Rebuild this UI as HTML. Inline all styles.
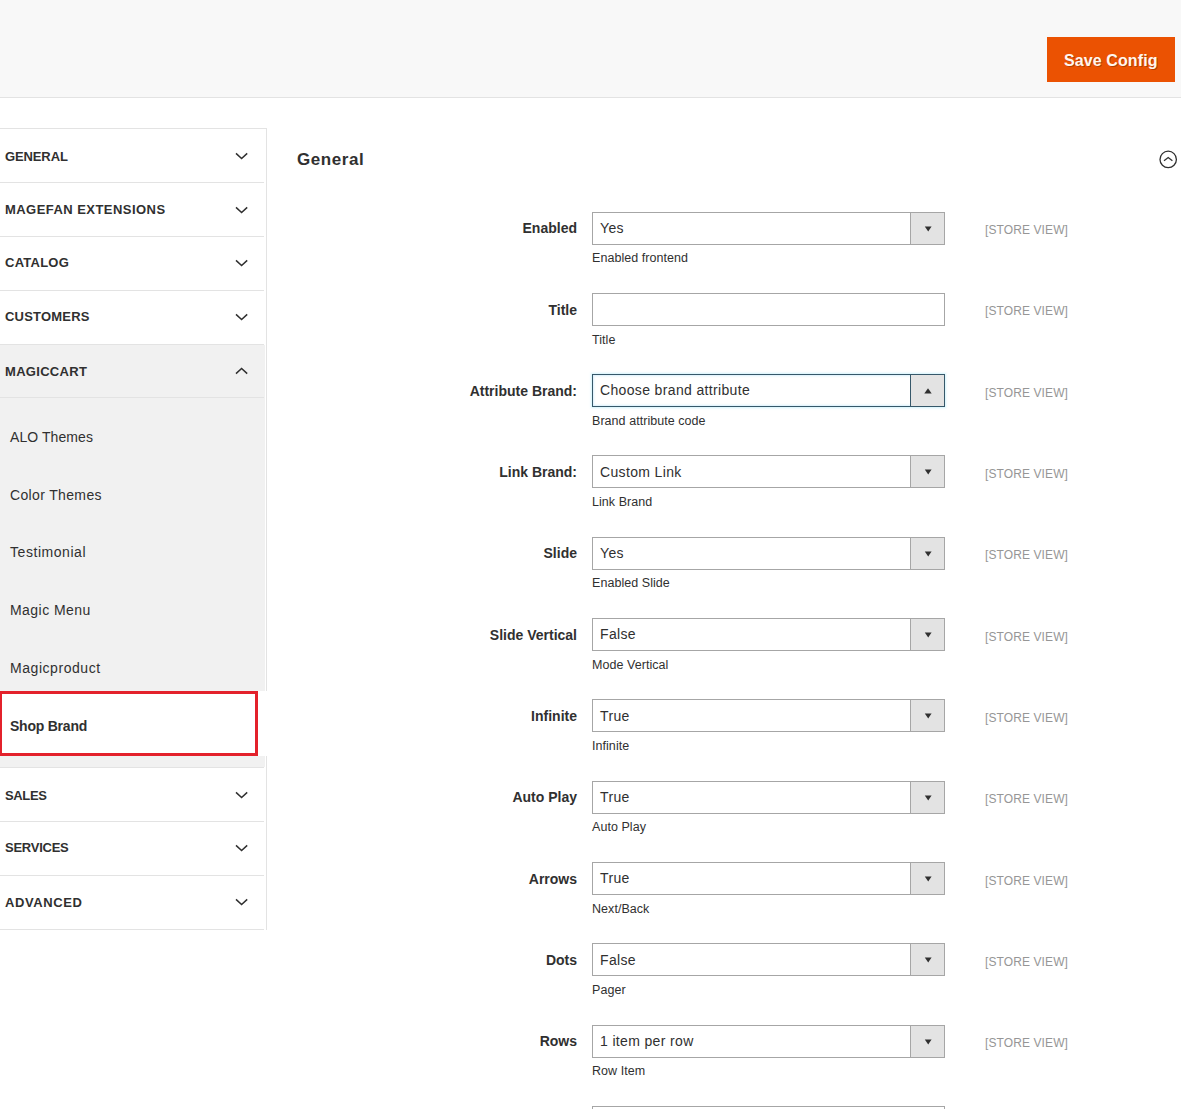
<!DOCTYPE html>
<html><head><meta charset="utf-8"><style>
html,body{margin:0;padding:0;background:#fff;width:1181px;height:1109px;overflow:hidden;position:relative;font-family:"Liberation Sans",sans-serif;}
.t{position:absolute;white-space:nowrap;line-height:20px;}
.b{position:absolute;box-sizing:border-box;}
</style></head><body>
<div class="b" style="left:0;top:0;width:1181px;height:97px;background:#f8f8f8"></div>
<div class="b" style="left:0;top:97px;width:1181px;height:1px;background:#e3e3e3"></div>
<div class="b" style="left:1047px;top:37px;width:128px;height:45px;background:#eb5202"></div>
<div class="t" style="left:1064px;top:51.26px;font-size:16px;font-weight:bold;letter-spacing:0.1px;color:#fff6ee;text-shadow:1px 1px 0 rgba(0,0,0,.25)">Save Config</div>
<div class="b" style="left:266px;top:128px;width:1px;height:802px;background:#e3e3e3"></div>
<div class="b" style="left:0;top:128px;width:266px;height:1px;background:#e3e3e3"></div>
<div class="b" style="left:0;top:345px;width:265px;height:422px;background:#f1f1f1"></div>
<div class="b" style="left:0;top:182px;width:264px;height:1px;background:#e3e3e3"></div>
<div class="b" style="left:0;top:236px;width:264px;height:1px;background:#e3e3e3"></div>
<div class="b" style="left:0;top:290px;width:264px;height:1px;background:#e3e3e3"></div>
<div class="b" style="left:0;top:344px;width:264px;height:1px;background:#e3e3e3"></div>
<div class="b" style="left:0;top:397px;width:264px;height:1px;background:#e3e3e3"></div>
<div class="b" style="left:0;top:767px;width:264px;height:1px;background:#e3e3e3"></div>
<div class="b" style="left:0;top:821px;width:264px;height:1px;background:#e3e3e3"></div>
<div class="b" style="left:0;top:875px;width:264px;height:1px;background:#e3e3e3"></div>
<div class="b" style="left:0;top:929px;width:264px;height:1px;background:#e3e3e3"></div>
<div class="t" style="left:5px;top:146.50px;font-size:13px;font-weight:bold;letter-spacing:-0.12px;color:#303030;">GENERAL</div>
<div class="t" style="left:5px;top:200.30px;font-size:13px;font-weight:bold;letter-spacing:0.45px;color:#303030;">MAGEFAN EXTENSIONS</div>
<div class="t" style="left:5px;top:253.20px;font-size:13px;font-weight:bold;letter-spacing:0.25px;color:#303030;">CATALOG</div>
<div class="t" style="left:5px;top:307.00px;font-size:13px;font-weight:bold;letter-spacing:0.2px;color:#303030;">CUSTOMERS</div>
<div class="t" style="left:5px;top:361.50px;font-size:13px;font-weight:bold;letter-spacing:0.3px;color:#303030;">MAGICCART</div>
<div class="t" style="left:5px;top:785.50px;font-size:13px;font-weight:bold;letter-spacing:-0.35px;color:#303030;">SALES</div>
<div class="t" style="left:5px;top:838.20px;font-size:13px;font-weight:bold;letter-spacing:-0.25px;color:#303030;">SERVICES</div>
<div class="t" style="left:5px;top:892.50px;font-size:13px;font-weight:bold;letter-spacing:0.6px;color:#303030;">ADVANCED</div>
<svg class="b" style="left:0;top:0" width="300" height="1000"><path d="M236.0,153.4 L241.6,158.5 L247.2,153.4 M236.0,207.4 L241.6,212.5 L247.2,207.4 M236.0,260.4 L241.6,265.5 L247.2,260.4 M236.0,314.4 L241.6,319.5 L247.2,314.4 M236.0,373.6 L241.6,368.5 L247.2,373.6 M236.0,792.4 L241.6,797.5 L247.2,792.4 M236.0,845.4 L241.6,850.5 L247.2,845.4 M236.0,899.4 L241.6,904.5 L247.2,899.4" fill="none" stroke="#303030" stroke-width="1.5"/></svg>
<div class="t" style="left:10px;top:427.05px;font-size:14px;letter-spacing:0.08px;color:#303030;">ALO Themes</div>
<div class="t" style="left:10px;top:485.05px;font-size:14px;letter-spacing:0.35px;color:#303030;">Color Themes</div>
<div class="t" style="left:10px;top:541.85px;font-size:14px;letter-spacing:0.55px;color:#303030;">Testimonial</div>
<div class="t" style="left:10px;top:600.25px;font-size:14px;letter-spacing:0.45px;color:#303030;">Magic Menu</div>
<div class="t" style="left:10px;top:658.05px;font-size:14px;letter-spacing:0.55px;color:#303030;">Magicproduct</div>
<div class="b" style="left:-1px;top:691px;width:259px;height:65px;background:#fff;border:3px solid #e3212b"></div>
<div class="b" style="left:258px;top:691px;width:10px;height:65px;background:#fff"></div>
<div class="t" style="left:10px;top:715.85px;font-size:14px;font-weight:bold;letter-spacing:-0.23px;color:#303030;">Shop Brand</div>
<div class="t" style="left:297px;top:150.11px;font-size:17px;font-weight:bold;letter-spacing:0.55px;color:#303030;">General</div>
<svg class="b" style="left:1155px;top:146px" width="26" height="26"><circle cx="13.2" cy="13.4" r="8.2" fill="none" stroke="#303030" stroke-width="1.3"/><path d="M9,14.8 L13.2,11.6 L17.4,14.8" fill="none" stroke="#303030" stroke-width="1.3"/></svg>
<div class="b" style="left:592px;top:212px;width:353px;height:33px;border:1px solid #a6a6a6;background:#fff"></div>
<div class="b" style="left:910px;top:212px;width:35px;height:33px;border:1px solid #a6a6a6;background:#e3e3e3"></div>
<svg class="b" style="left:924px;top:225px" width="9" height="8"><path d="M0.8,1.5 L7.6,1.5 L4.2,6.6 Z" fill="#303030"/></svg>
<div class="t" style="right:604px;text-align:right;top:218.25px;font-size:14px;font-weight:bold;color:#303030;">Enabled</div>
<div class="t" style="left:600px;top:217.85px;font-size:14px;letter-spacing:0.35px;color:#303030;">Yes</div>
<div class="t" style="left:592px;top:248.27px;font-size:12.5px;letter-spacing:0.05px;color:#303030;">Enabled frontend</div>
<div class="t" style="left:985px;top:220.14px;font-size:12px;letter-spacing:0.1px;color:#969696;">[STORE VIEW]</div>
<div class="b" style="left:592px;top:293px;width:353px;height:33px;border:1px solid #a6a6a6;background:#fff"></div>
<div class="t" style="right:604px;text-align:right;top:299.55px;font-size:14px;font-weight:bold;color:#303030;">Title</div>
<div class="t" style="left:592px;top:329.57px;font-size:12.5px;letter-spacing:0.05px;color:#303030;">Title</div>
<div class="t" style="left:985px;top:301.44px;font-size:12px;letter-spacing:0.1px;color:#969696;">[STORE VIEW]</div>
<div class="b" style="left:592px;top:374px;width:353px;height:33px;border:1px solid #36586a;background:#fff;box-shadow:0 0 2px 1px rgba(180,235,250,.6), inset 0 0 2px 1px rgba(180,225,250,.5)"></div>
<div class="b" style="left:910px;top:374px;width:35px;height:33px;border:1px solid #36586a;background:#e3e3e3"></div>
<svg class="b" style="left:924px;top:386.5px" width="9" height="8"><path d="M0.3,6.5 L4,1.3 L7.7,6.5 Z" fill="#303030"/></svg>
<div class="t" style="right:604px;text-align:right;top:380.85px;font-size:14px;font-weight:bold;color:#303030;">Attribute Brand:</div>
<div class="t" style="left:600px;top:380.45px;font-size:14px;letter-spacing:0.35px;color:#303030;">Choose brand attribute</div>
<div class="t" style="left:592px;top:410.87px;font-size:12.5px;letter-spacing:0.05px;color:#303030;">Brand attribute code</div>
<div class="t" style="left:985px;top:382.74px;font-size:12px;letter-spacing:0.1px;color:#969696;">[STORE VIEW]</div>
<div class="b" style="left:592px;top:455px;width:353px;height:33px;border:1px solid #a6a6a6;background:#fff"></div>
<div class="b" style="left:910px;top:455px;width:35px;height:33px;border:1px solid #a6a6a6;background:#e3e3e3"></div>
<svg class="b" style="left:924px;top:468px" width="9" height="8"><path d="M0.8,1.5 L7.6,1.5 L4.2,6.6 Z" fill="#303030"/></svg>
<div class="t" style="right:604px;text-align:right;top:462.15px;font-size:14px;font-weight:bold;color:#303030;">Link Brand:</div>
<div class="t" style="left:600px;top:461.75px;font-size:14px;letter-spacing:0.35px;color:#303030;">Custom Link</div>
<div class="t" style="left:592px;top:492.17px;font-size:12.5px;letter-spacing:0.05px;color:#303030;">Link Brand</div>
<div class="t" style="left:985px;top:464.04px;font-size:12px;letter-spacing:0.1px;color:#969696;">[STORE VIEW]</div>
<div class="b" style="left:592px;top:537px;width:353px;height:33px;border:1px solid #a6a6a6;background:#fff"></div>
<div class="b" style="left:910px;top:537px;width:35px;height:33px;border:1px solid #a6a6a6;background:#e3e3e3"></div>
<svg class="b" style="left:924px;top:550px" width="9" height="8"><path d="M0.8,1.5 L7.6,1.5 L4.2,6.6 Z" fill="#303030"/></svg>
<div class="t" style="right:604px;text-align:right;top:543.45px;font-size:14px;font-weight:bold;color:#303030;">Slide</div>
<div class="t" style="left:600px;top:543.05px;font-size:14px;letter-spacing:0.35px;color:#303030;">Yes</div>
<div class="t" style="left:592px;top:573.47px;font-size:12.5px;letter-spacing:0.05px;color:#303030;">Enabled Slide</div>
<div class="t" style="left:985px;top:545.34px;font-size:12px;letter-spacing:0.1px;color:#969696;">[STORE VIEW]</div>
<div class="b" style="left:592px;top:618px;width:353px;height:33px;border:1px solid #a6a6a6;background:#fff"></div>
<div class="b" style="left:910px;top:618px;width:35px;height:33px;border:1px solid #a6a6a6;background:#e3e3e3"></div>
<svg class="b" style="left:924px;top:631px" width="9" height="8"><path d="M0.8,1.5 L7.6,1.5 L4.2,6.6 Z" fill="#303030"/></svg>
<div class="t" style="right:604px;text-align:right;top:624.75px;font-size:14px;font-weight:bold;color:#303030;">Slide Vertical</div>
<div class="t" style="left:600px;top:624.35px;font-size:14px;letter-spacing:0.35px;color:#303030;">False</div>
<div class="t" style="left:592px;top:654.77px;font-size:12.5px;letter-spacing:0.05px;color:#303030;">Mode Vertical</div>
<div class="t" style="left:985px;top:626.64px;font-size:12px;letter-spacing:0.1px;color:#969696;">[STORE VIEW]</div>
<div class="b" style="left:592px;top:699px;width:353px;height:33px;border:1px solid #a6a6a6;background:#fff"></div>
<div class="b" style="left:910px;top:699px;width:35px;height:33px;border:1px solid #a6a6a6;background:#e3e3e3"></div>
<svg class="b" style="left:924px;top:712px" width="9" height="8"><path d="M0.8,1.5 L7.6,1.5 L4.2,6.6 Z" fill="#303030"/></svg>
<div class="t" style="right:604px;text-align:right;top:706.05px;font-size:14px;font-weight:bold;color:#303030;">Infinite</div>
<div class="t" style="left:600px;top:705.65px;font-size:14px;letter-spacing:0.35px;color:#303030;">True</div>
<div class="t" style="left:592px;top:736.07px;font-size:12.5px;letter-spacing:0.05px;color:#303030;">Infinite</div>
<div class="t" style="left:985px;top:707.94px;font-size:12px;letter-spacing:0.1px;color:#969696;">[STORE VIEW]</div>
<div class="b" style="left:592px;top:781px;width:353px;height:33px;border:1px solid #a6a6a6;background:#fff"></div>
<div class="b" style="left:910px;top:781px;width:35px;height:33px;border:1px solid #a6a6a6;background:#e3e3e3"></div>
<svg class="b" style="left:924px;top:794px" width="9" height="8"><path d="M0.8,1.5 L7.6,1.5 L4.2,6.6 Z" fill="#303030"/></svg>
<div class="t" style="right:604px;text-align:right;top:787.35px;font-size:14px;font-weight:bold;color:#303030;">Auto Play</div>
<div class="t" style="left:600px;top:786.95px;font-size:14px;letter-spacing:0.35px;color:#303030;">True</div>
<div class="t" style="left:592px;top:817.37px;font-size:12.5px;letter-spacing:0.05px;color:#303030;">Auto Play</div>
<div class="t" style="left:985px;top:789.24px;font-size:12px;letter-spacing:0.1px;color:#969696;">[STORE VIEW]</div>
<div class="b" style="left:592px;top:862px;width:353px;height:33px;border:1px solid #a6a6a6;background:#fff"></div>
<div class="b" style="left:910px;top:862px;width:35px;height:33px;border:1px solid #a6a6a6;background:#e3e3e3"></div>
<svg class="b" style="left:924px;top:875px" width="9" height="8"><path d="M0.8,1.5 L7.6,1.5 L4.2,6.6 Z" fill="#303030"/></svg>
<div class="t" style="right:604px;text-align:right;top:868.65px;font-size:14px;font-weight:bold;color:#303030;">Arrows</div>
<div class="t" style="left:600px;top:868.25px;font-size:14px;letter-spacing:0.35px;color:#303030;">True</div>
<div class="t" style="left:592px;top:898.67px;font-size:12.5px;letter-spacing:0.05px;color:#303030;">Next/Back</div>
<div class="t" style="left:985px;top:870.54px;font-size:12px;letter-spacing:0.1px;color:#969696;">[STORE VIEW]</div>
<div class="b" style="left:592px;top:943px;width:353px;height:33px;border:1px solid #a6a6a6;background:#fff"></div>
<div class="b" style="left:910px;top:943px;width:35px;height:33px;border:1px solid #a6a6a6;background:#e3e3e3"></div>
<svg class="b" style="left:924px;top:956px" width="9" height="8"><path d="M0.8,1.5 L7.6,1.5 L4.2,6.6 Z" fill="#303030"/></svg>
<div class="t" style="right:604px;text-align:right;top:949.95px;font-size:14px;font-weight:bold;color:#303030;">Dots</div>
<div class="t" style="left:600px;top:949.55px;font-size:14px;letter-spacing:0.35px;color:#303030;">False</div>
<div class="t" style="left:592px;top:979.97px;font-size:12.5px;letter-spacing:0.05px;color:#303030;">Pager</div>
<div class="t" style="left:985px;top:951.84px;font-size:12px;letter-spacing:0.1px;color:#969696;">[STORE VIEW]</div>
<div class="b" style="left:592px;top:1025px;width:353px;height:33px;border:1px solid #a6a6a6;background:#fff"></div>
<div class="b" style="left:910px;top:1025px;width:35px;height:33px;border:1px solid #a6a6a6;background:#e3e3e3"></div>
<svg class="b" style="left:924px;top:1038px" width="9" height="8"><path d="M0.8,1.5 L7.6,1.5 L4.2,6.6 Z" fill="#303030"/></svg>
<div class="t" style="right:604px;text-align:right;top:1031.25px;font-size:14px;font-weight:bold;color:#303030;">Rows</div>
<div class="t" style="left:600px;top:1030.85px;font-size:14px;letter-spacing:0.35px;color:#303030;">1 item per row</div>
<div class="t" style="left:592px;top:1061.27px;font-size:12.5px;letter-spacing:0.05px;color:#303030;">Row Item</div>
<div class="t" style="left:985px;top:1033.14px;font-size:12px;letter-spacing:0.1px;color:#969696;">[STORE VIEW]</div>
<div class="b" style="left:592px;top:1106px;width:353px;height:33px;border:1px solid #a6a6a6;background:#fff"></div>
</body></html>
